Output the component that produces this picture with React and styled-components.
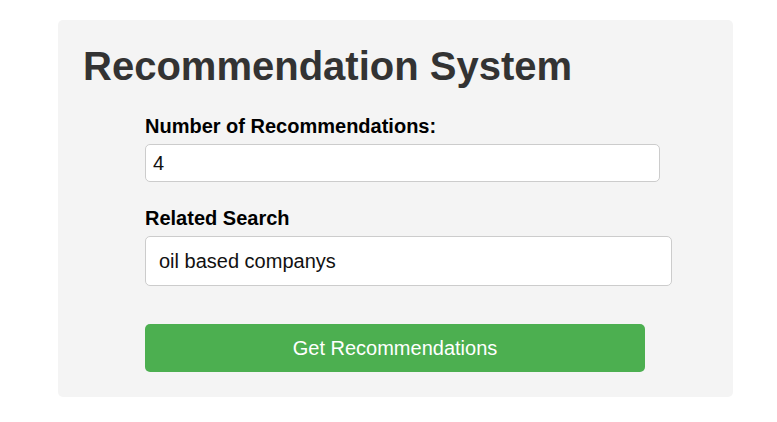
import React, { useState } from "react";
import styled, { createGlobalStyle } from "styled-components";

const GlobalStyle = createGlobalStyle`
  body {
    margin: 0;
    background: #ffffff;
    font-family: "Liberation Sans", Arial, sans-serif;
  }
`;

const Page = styled.div`
  padding: 20px 44px 26px 58px;
`;

const Panel = styled.div`
  width: 675px;
  box-sizing: border-box;
  padding: 24px 26px 25px 25px;
  background-color: #f4f4f4;
  border-radius: 5px;
`;

const Title = styled.h1`
  margin: 0 0 26px 0;
  font-size: 40px;
  font-weight: 700;
  color: #333333;
`;

const Form = styled.form`
  width: 500px;
  margin: 0 auto;
  display: flex;
  flex-direction: column;
`;

const Label = styled.label`
  display: block;
  margin-bottom: 6px;
  font-size: 20px;
  font-weight: 700;
  color: #000000;
`;

const Input = styled.input`
  box-sizing: border-box;
  width: ${(p) => p.$width}px;
  height: ${(p) => p.$height}px;
  padding: 0 ${(p) => p.$padX}px;
  margin-bottom: ${(p) => p.$gap}px;
  border: 1px solid #cccccc;
  border-radius: 5px;
  background: #ffffff;
  font-family: "Liberation Sans", Arial, sans-serif;
  font-size: 20px;
  color: #111111;
  outline: none;
`;

const Button = styled.button`
  width: 500px;
  height: 48px;
  border: none;
  border-radius: 5px;
  background-color: #4caf50;
  color: #ffffff;
  font-family: "Liberation Sans", Arial, sans-serif;
  font-size: 20px;
  cursor: pointer;
`;

export default function App() {
  const [count, setCount] = useState("4");
  const [query, setQuery] = useState("oil based companys");

  return (
    <Page>
      <GlobalStyle />
      <Panel>
        <Title>Recommendation System</Title>
        <Form onSubmit={(e) => e.preventDefault()}>
          <Label htmlFor="count">Number of Recommendations:</Label>
          <Input
            id="count"
            type="text"
            value={count}
            onChange={(e) => setCount(e.target.value)}
            $width={515}
            $height={38}
            $padX={7}
            $gap={25}
          />
          <Label htmlFor="query">Related Search</Label>
          <Input
            id="query"
            type="text"
            value={query}
            onChange={(e) => setQuery(e.target.value)}
            $width={527}
            $height={50}
            $padX={13}
            $gap={38}
          />
          <Button type="submit">Get Recommendations</Button>
        </Form>
      </Panel>
    </Page>
  );
}
